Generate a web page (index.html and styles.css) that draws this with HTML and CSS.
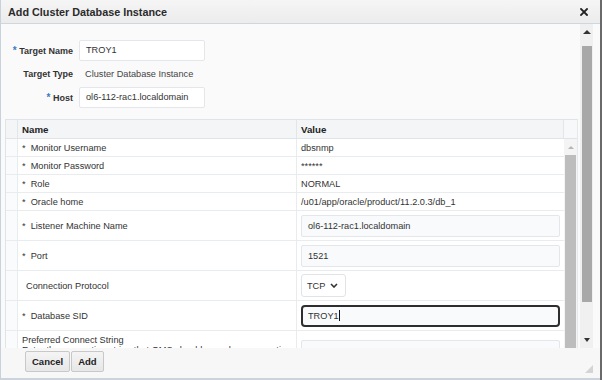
FILE: index.html
```html
<!DOCTYPE html>
<html lang="en">
<head>
    <meta charset="UTF-8">
    <meta name="viewport" content="width=device-width, initial-scale=1.0">
    <title>Add Cluster Database Instance</title>
    <link rel="stylesheet" href="styles.css">
</head>
<body>
    <div class="dialog">
        <div class="dialog-header">
            <span class="dialog-title">Add Cluster Database Instance</span>
            <svg class="dialog-close" width="8" height="8" viewBox="0 0 8 8">
                <path d="M1 1 L7 7 M7 1 L1 7" stroke="#222" stroke-width="1.8" stroke-linecap="square"/>
            </svg>
        </div>

        <div class="dialog-body">
            <div class="dialog-content">
                <div class="target-form">
                    <div class="form-label"><span class="req">*</span> Target Name</div>
                    <div class="text-input">TROY1</div>
                    <div class="form-label">Target Type</div>
                    <div class="form-value">Cluster Database Instance</div>
                    <div class="form-label"><span class="req">*</span> Host</div>
                    <div class="text-input">ol6-112-rac1.localdomain</div>
                </div>

                <div class="prop-table">
                    <div class="prop-head">
                        <div class="cell"></div>
                        <div class="cell">Name</div>
                        <div class="cell">Value</div>
                        <div class="head-gutter"></div>
                    </div>
                    <div class="prop-body">
                        <div class="prop-rows">
                            <div class="prop-row">
                                <div class="cell"></div>
                                <div class="cell">*&nbsp; Monitor Username</div>
                                <div class="cell">dbsnmp</div>
                            </div>
                            <div class="prop-row">
                                <div class="cell"></div>
                                <div class="cell">*&nbsp; Monitor Password</div>
                                <div class="cell">******</div>
                            </div>
                            <div class="prop-row">
                                <div class="cell"></div>
                                <div class="cell">*&nbsp; Role</div>
                                <div class="cell">NORMAL</div>
                            </div>
                            <div class="prop-row">
                                <div class="cell"></div>
                                <div class="cell">*&nbsp; Oracle home</div>
                                <div class="cell">/u01/app/oracle/product/11.2.0.3/db_1</div>
                            </div>
                            <div class="prop-row input-row">
                                <div class="cell"></div>
                                <div class="cell">*&nbsp; Listener Machine Name</div>
                                <div class="cell"><div class="text-input wide">ol6-112-rac1.localdomain</div></div>
                            </div>
                            <div class="prop-row input-row">
                                <div class="cell"></div>
                                <div class="cell">*&nbsp; Port</div>
                                <div class="cell"><div class="text-input wide">1521</div></div>
                            </div>
                            <div class="prop-row input-row">
                                <div class="cell"></div>
                                <div class="cell optional">Connection Protocol</div>
                                <div class="cell">
                                    <div class="select">
                                        TCP
                                        <svg width="8" height="5" viewBox="0 0 8 5">
                                            <path d="M1 1 L4 4 L7 1" fill="none" stroke="#333" stroke-width="1.6"/>
                                        </svg>
                                    </div>
                                </div>
                            </div>
                            <div class="prop-row input-row">
                                <div class="cell"></div>
                                <div class="cell">*&nbsp; Database SID</div>
                                <div class="cell"><div class="text-input wide focused">TROY1<span class="caret"></span></div></div>
                            </div>
                            <div class="prop-row input-row tall">
                                <div class="cell"></div>
                                <div class="cell note">Preferred Connect String<br>Enter the connection string that OMS should use when connecting</div>
                                <div class="cell top"><div class="text-input wide"></div></div>
                            </div>
                        </div>
                        <div class="inner-scroll">
                            <div class="sb-btn"><span class="arrow-up light"></span></div>
                            <div class="inner-thumb"></div>
                        </div>
                    </div>
                </div>
            </div>

            <div class="outer-scroll">
                <div class="sb-btn top-btn"><span class="arrow-up"></span></div>
                <div class="outer-thumb"></div>
                <div class="sb-track"></div>
                <div class="sb-btn"><span class="arrow-down"></span></div>
            </div>
        </div>

        <div class="dialog-footer">
            <button class="btn">Cancel</button>
            <button class="btn">Add</button>
            <svg class="grip" width="8" height="8" viewBox="0 0 8 8">
                <path d="M8 0 L8 8 L0 8 Z" fill="#d4d4d4"/>
            </svg>
        </div>
    </div>
</body>
</html>
```

FILE: styles.css
```css
body {
    margin: 0;
    font-family: "Liberation Sans", Arial, sans-serif;
    color: #333;
}
.dialog {
    width: 602px;
    height: 380px;
    box-sizing: border-box;
    border-left: 1px solid #c9d2da;
    border-right: 2px solid #6a6a6a;
    background: #fafafa;
    display: flex;
    flex-direction: column;
    overflow: hidden;
}
.dialog-header {
    height: 23px;
    flex: none;
    border-bottom: 1px solid #cdd7e0;
    background: linear-gradient(#f5f5f5, #ececec);
    display: flex;
    align-items: center;
    justify-content: space-between;
    padding: 0 12px 0 7px;
}
.dialog-title {
    font-size: 10.8px;
    font-weight: bold;
    color: #2b2b2b;
}
.dialog-body {
    height: 324px;
    flex: none;
    display: flex;
}
.dialog-content {
    flex: 1;
    display: flex;
    flex-direction: column;
    overflow: hidden;
    padding-right: 2px;
}
.target-form {
    display: grid;
    grid-template-columns: 72px 126px;
    grid-template-rows: 21px 18px 21px;
    column-gap: 6px;
    row-gap: 4px;
    padding-top: 16px;
    align-items: center;
    font-size: 9.2px;
}
.form-label {
    text-align: right;
    font-weight: bold;
    font-size: 9px;
    color: #333;
}
.req {
    color: #3a7cc4;
    font-size: 10px;
}
.form-value {
    padding-left: 6px;
    color: #444;
}
.text-input {
    box-sizing: border-box;
    height: 21px;
    line-height: 19px;
    border: 1px solid #e3e7eb;
    border-radius: 2px;
    background: #fff;
    padding-left: 6px;
    font-size: 9.2px;
    color: #333;
}
.text-input.wide {
    width: 259px;
    height: 22px;
    line-height: 20px;
    background: #f8fafc;
}
.text-input.focused {
    border: 2px solid #2e2e2e;
    border-radius: 4px;
    line-height: 18px;
    padding-left: 5px;
}
.caret {
    display: inline-block;
    width: 1px;
    height: 11px;
    background: #111;
    vertical-align: -2px;
}
.prop-table {
    margin: 11px 0 0 4px;
    border-top: 1px solid #dfe4e8;
    border-left: 1px solid #dfe4e8;
    border-right: 1px solid #e6e9ec;
    flex: 1;
    display: flex;
    flex-direction: column;
    overflow: hidden;
    font-size: 9.2px;
}
.prop-head {
    display: grid;
    grid-template-columns: 12px 279px 1fr 13px;
    height: 18px;
    flex: none;
    background: #f3f5f6;
    border-bottom: 1px solid #dfe4e8;
    font-weight: bold;
    font-size: 9.7px;
    color: #222;
}
.prop-head .cell {
    display: flex;
    align-items: center;
    padding-left: 4px;
    border-right: 1px solid #e2e6ea;
}
.prop-head .cell:first-child {
    padding: 0;
}
.head-gutter {
    background: #f7f8f9;
}
.prop-body {
    flex: 1;
    display: flex;
    overflow: hidden;
}
.prop-rows {
    flex: 1;
    background: #fff;
}
.prop-row {
    display: grid;
    grid-template-columns: 12px 279px 1fr;
    height: 18px;
    box-sizing: border-box;
    border-bottom: 1px solid #e8ecef;
}
.prop-row .cell {
    display: flex;
    align-items: center;
    padding-left: 4px;
    border-right: 1px solid #e8ecef;
    white-space: nowrap;
}
.prop-row .cell:first-child {
    padding: 0;
    background: #fafbfc;
}
.prop-row .cell:last-child {
    border-right: none;
}
.input-row {
    height: 30px;
}
.prop-row .optional {
    padding-left: 8px;
}
.prop-row .note {
    align-items: flex-start;
    padding-top: 4px;
    line-height: 10px;
}
.prop-row .top {
    align-items: flex-start;
    padding-top: 9px;
}
.tall {
    height: 40px;
}
.select {
    box-sizing: border-box;
    width: 45px;
    height: 23px;
    border: 1px solid #e0e4e8;
    border-radius: 3px;
    background: #fff;
    display: flex;
    align-items: center;
    justify-content: space-between;
    padding: 0 7px 0 5px;
    font-size: 9.2px;
}
.inner-scroll {
    width: 13px;
    flex: none;
    display: flex;
    flex-direction: column;
    background: #f4f4f4;
}
.inner-thumb {
    flex: 1;
    margin: 0 1px 0 1px;
    background: #bdbdbd;
}
.outer-scroll {
    width: 13px;
    flex: none;
    margin-right: 7px;
    display: flex;
    flex-direction: column;
    background: #f0f0f0;
}
.sb-btn {
    height: 16px;
    display: flex;
    align-items: center;
    justify-content: center;
    flex: none;
}
.top-btn {
    height: 22px;
    align-items: flex-start;
    padding-top: 6px;
    box-sizing: border-box;
}
.outer-thumb {
    height: 256px;
    flex: none;
    margin: 0 1px 0 2px;
    background: #a8a8a8;
}
.sb-track {
    flex: 1;
}
.arrow-up {
    width: 0;
    height: 0;
    border-left: 4px solid transparent;
    border-right: 4px solid transparent;
    border-bottom: 4px solid #333;
}
.arrow-up.light {
    border-bottom-color: #b5b5b5;
    border-left-width: 3px;
    border-right-width: 3px;
    border-bottom-width: 3px;
}
.arrow-down {
    width: 0;
    height: 0;
    border-left: 3px solid transparent;
    border-right: 3px solid transparent;
    border-top: 4px solid #333;
}
.dialog-footer {
    height: 30px;
    flex: none;
    box-sizing: content-box;
    border-bottom: 2px solid #cbd4dc;
    background: #f7f7f7;
    display: flex;
    align-items: flex-start;
    gap: 1px;
    padding: 3px 0 0 24px;
    box-sizing: border-box;
    height: 32px;
    position: relative;
}
.btn {
    height: 21px;
    padding: 0 6px;
    border: 1px solid #c8c8c8;
    border-radius: 2px;
    background: linear-gradient(#f4f4f4, #e7e7e7);
    font-family: "Liberation Sans", Arial, sans-serif;
    font-weight: bold;
    font-size: 9.5px;
    color: #222;
    cursor: pointer;
}
.grip {
    position: absolute;
    right: 7px;
    bottom: 5px;
}
```
